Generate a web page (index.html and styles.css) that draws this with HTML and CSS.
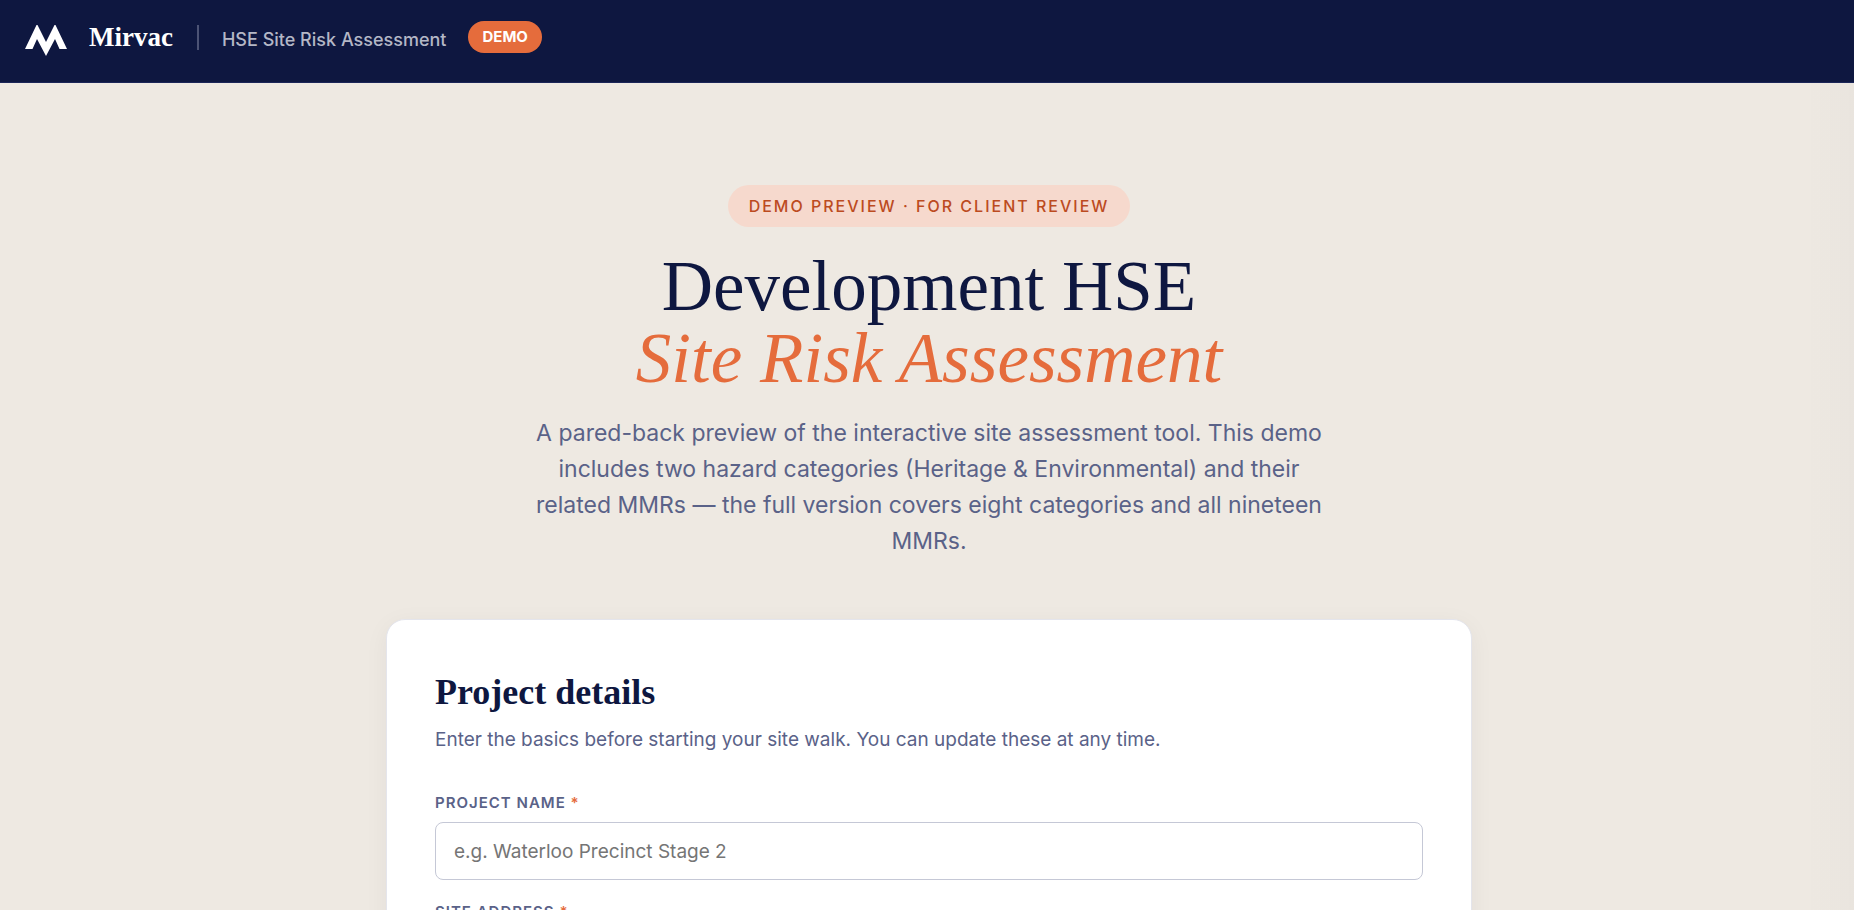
FILE: index.html
```html
<!DOCTYPE html>
<html lang="en">
<head>
  <meta charset="UTF-8" />
  <meta name="viewport" content="width=device-width, initial-scale=1.0" />
  <title>Mirvac | HSE Site Risk Assessment</title>
  <link rel="stylesheet" href="styles.css">
</head>
<body>
  <header class="topbar">
    <svg class="logo" viewBox="0 0 42 32" aria-hidden="true">
      <path d="M0 24 L11.5 0 H12.5 L21 17 L29.5 0 H30.5 L42 24 H34.5 L30 14 L21 31 L12 14 L7.500 24 Z" fill="#fff" />
    </svg>
    <span class="brand">Mirvac</span>
    <span class="divider"></span>
    <span class="app-name">HSE Site Risk Assessment</span>
    <span class="badge">DEMO</span>
  </header>

  <main class="container">
    <section class="hero">
      <span class="eyebrow">Demo preview · For client review</span>
      <h1>Development HSE<br /><em>Site Risk Assessment</em></h1>
      <p>A pared-back preview of the interactive site assessment tool. This demo includes two hazard categories (Heritage &amp; Environmental) and their related MMRs — the full version covers eight categories and all nineteen MMRs.</p>
    </section>

    <section class="card">
      <h2>Project details</h2>
      <p class="card-sub">Enter the basics before starting your site walk. You can update these at any time.</p>
      <form id="projectForm">
        <div class="field">
          <label for="projectName">Project name <span class="req">*</span></label>
          <input type="text" id="projectName" placeholder="e.g. Waterloo Precinct Stage 2" required />
        </div>
        <div class="field">
          <label for="siteAddress">Site address <span class="req">*</span></label>
          <input type="text" id="siteAddress" required />
        </div>
      </form>
    </section>
  </main>
  <div class="edge-shadow"></div>
</body>
</html>
```
FILE: styles.css
```css
:root {
  --navy: #0e1740;
  --orange: #e56c3c;
  --sand: #eee9e2;
  --slate: #5a6288;
  --sans: Inter, "Liberation Sans", sans-serif;
  --serif: "Liberation Serif", serif;
}
* {
  box-sizing: border-box;
}
html {
  scrollbar-width: none;
}
body {
  margin: 0;
  font-family: var(--sans);
  background: var(--sand);
  color: var(--navy);
}
.topbar {
  display: flex;
  align-items: flex-start;
  background: var(--navy);
  border-bottom: 1px solid #1c2658;
  padding: 21px 24px 25px;
}
.logo {
  width: 42px;
  height: 32px;
  margin: 4px 22px 0 1px;
}
.brand {
  font-family: var(--serif);
  font-size: 27px;
  font-weight: 700;
  line-height: 32px;
  color: #fff;
}
.divider {
  width: 2px;
  height: 25px;
  margin: 4px 23px 0 24px;
  background: #4c5375;
}
.app-name {
  font-size: 18px;
  font-weight: 500;
  line-height: 24px;
  padding-top: 7px;
  color: #b4b7c6;
}
.badge {
  margin-left: 22px;
  padding: 0 14px;
  border-radius: 16px;
  background: var(--orange);
  color: #fff;
  font-size: 15px;
  font-weight: 700;
  line-height: 32px;
}
.container {
  max-width: 1134px;
  margin: 0 auto;
  padding: 102px 22px 72px 26px;
}
.hero {
  text-align: center;
}
.eyebrow {
  display: inline-block;
  padding: 0 21px;
  border-radius: 21px;
  background: #f6d9cd;
  color: #bc4b1f;
  font-size: 16px;
  font-weight: 500;
  letter-spacing: 2px;
  line-height: 42px;
  text-transform: uppercase;
}
h1 {
  margin: 23px 0 21px;
  font-family: var(--serif);
  font-size: 71px;
  font-weight: 400;
  line-height: 72px;
}
h1 em {
  color: var(--orange);
}
.hero p {
  max-width: 816px;
  margin: 0 auto 60px;
  color: var(--slate);
  font-size: 23px;
  line-height: 36px;
}
.card {
  background: #fff;
  border: 1px solid #e4e5ec;
  border-radius: 19px;
  padding: 48px;
  box-shadow: 0 5px 24px rgba(14, 23, 64, 0.05);
}
h2 {
  margin: 0 0 12px;
  font-family: var(--serif);
  font-size: 36px;
  font-weight: 700;
  line-height: 48px;
}
.card-sub {
  margin: 0 0 39px;
  color: var(--slate);
  font-size: 19px;
  line-height: 24px;
}
.field {
  margin-bottom: 20px;
}
.field label {
  display: block;
  margin-bottom: 7px;
  color: var(--slate);
  font-size: 15px;
  font-weight: 600;
  letter-spacing: 1px;
  line-height: 24px;
  text-transform: uppercase;
}
.req {
  color: var(--orange);
}
.field input {
  display: block;
  width: 100%;
  height: 58px;
  padding: 0 18px;
  border: 1px solid #c5c8d6;
  border-radius: 8px;
  background: #fff;
  color: var(--navy);
  font-family: inherit;
  font-size: 19px;
}
.field input::placeholder {
  color: #757575;
}
.edge-shadow {
  position: fixed;
  top: 83px;
  right: 0;
  bottom: 0;
  width: 48px;
  background: linear-gradient(to right, rgba(14, 23, 64, 0), rgba(14, 23, 64, 0.02));
  pointer-events: none;
}
```
